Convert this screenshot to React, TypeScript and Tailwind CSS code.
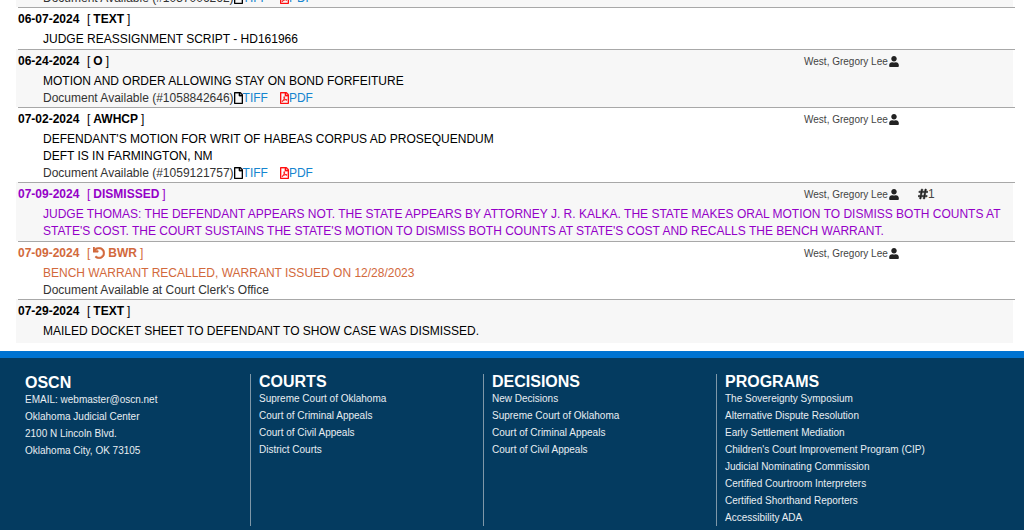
import React from "react";
import { FaHashtag, FaRegFile, FaRegFilePdf, FaUndo, FaUser } from "react-icons/fa";

interface DocketEntry {
    date: string;
    code: string;
    lines: string[];
    color?: string;
    party?: string;
    count?: string;
    documentId?: string;
    note?: string;
    recalled?: boolean;
}

const entries: DocketEntry[] = [
    {
        date: "06-07-2024",
        code: "TEXT",
        lines: ["JUDGE REASSIGNMENT SCRIPT - HD161966"],
    },
    {
        date: "06-24-2024",
        code: "O",
        lines: ["MOTION AND ORDER ALLOWING STAY ON BOND FORFEITURE"],
        party: "West, Gregory Lee",
        documentId: "1058842646",
    },
    {
        date: "07-02-2024",
        code: "AWHCP",
        lines: [
            "DEFENDANT'S MOTION FOR WRIT OF HABEAS CORPUS AD PROSEQUENDUM",
            "DEFT IS IN FARMINGTON, NM",
        ],
        party: "West, Gregory Lee",
        documentId: "1059121757",
    },
    {
        date: "07-09-2024",
        code: "DISMISSED",
        lines: [
            "JUDGE THOMAS: THE DEFENDANT APPEARS NOT. THE STATE APPEARS BY ATTORNEY J. R. KALKA. THE STATE MAKES ORAL MOTION TO DISMISS BOTH COUNTS AT STATE'S COST. THE COURT SUSTAINS THE STATE'S MOTION TO DISMISS BOTH COUNTS AT STATE'S COST AND RECALLS THE BENCH WARRANT.",
        ],
        color: "text-[#9400c8]",
        party: "West, Gregory Lee",
        count: "1",
    },
    {
        date: "07-09-2024",
        code: "BWR",
        lines: ["BENCH WARRANT RECALLED, WARRANT ISSUED ON 12/28/2023"],
        color: "text-[#d2693c]",
        party: "West, Gregory Lee",
        note: "Document Available at Court Clerk's Office",
        recalled: true,
    },
    {
        date: "07-29-2024",
        code: "TEXT",
        lines: ["MAILED DOCKET SHEET TO DEFENDANT TO SHOW CASE WAS DISMISSED."],
    },
];

const linkColumns = [
    {
        title: "COURTS",
        links: [
            "Supreme Court of Oklahoma",
            "Court of Criminal Appeals",
            "Court of Civil Appeals",
            "District Courts",
        ],
    },
    {
        title: "DECISIONS",
        links: [
            "New Decisions",
            "Supreme Court of Oklahoma",
            "Court of Criminal Appeals",
            "Court of Civil Appeals",
        ],
    },
    {
        title: "PROGRAMS",
        links: [
            "The Sovereignty Symposium",
            "Alternative Dispute Resolution",
            "Early Settlement Mediation",
            "Children's Court Improvement Program (CIP)",
            "Judicial Nominating Commission",
            "Certified Courtroom Interpreters",
            "Certified Shorthand Reporters",
            "Accessibility ADA",
        ],
    },
];

function DocumentLinks({ id }: { id: string }) {
    return (
        <p className="flex items-center h-4 text-[#333]">
            Document Available (#{id})
            <a href="#tiff" className="flex items-center text-[#1585cf]">
                <FaRegFile className="w-[9px] h-3 text-black stroke-current stroke-[16]" />
                TIFF
            </a>
            <a href="#pdf" className="flex items-center ml-3 text-[#1585cf]">
                <FaRegFilePdf className="w-[9px] h-3 text-[#ff1010] stroke-current stroke-[16]" />
                PDF
            </a>
        </p>
    );
}

function Entry({ entry }: { entry: DocketEntry }) {
    return (
        <li className={`ml-4 mr-[11px] pb-px last:pb-[3px] even:bg-[#f7f7f7] ${entry.color ?? "text-black"}`}>
            <hr className="ml-0.5 -mr-0.5 border-[#a8a8a8]" />
            <div className="flex items-center h-[22px] pl-0.5">
                <div className="flex w-[79%] font-bold">
                    <span className="w-[69px]">{entry.date}</span>
                    <span className="flex items-center gap-[3px]">
                        <span className="font-normal">[</span>
                        {entry.recalled && <FaUndo className="w-3 h-3 stroke-current stroke-[20]" />}
                        <span>{entry.code}</span>
                        <span className="font-normal">]</span>
                    </span>
                </div>
                {entry.party && (
                    <div className="flex items-center gap-px w-[114px] text-[10px] text-[#444]">
                        {entry.party}
                        <FaUser className="w-[10px] h-[11px] text-[#222]" />
                    </div>
                )}
                {entry.count && (
                    <div className="flex items-center text-[#444]">
                        <FaHashtag className="w-2.5 h-3 text-[#222] stroke-current stroke-[24]" />
                        {entry.count}
                    </div>
                )}
            </div>
            <div className="pl-[27px] pt-px leading-[17px]">
                {entry.lines.map((line) => (
                    <p key={line}>{line}</p>
                ))}
                {entry.documentId && <DocumentLinks id={entry.documentId} />}
                {entry.note && <p className="leading-4 text-[#333]">{entry.note}</p>}
            </div>
        </li>
    );
}

export default function App() {
    return (
        <div className="min-h-screen flex flex-col overflow-hidden bg-white font-['Liberation_Sans',Arial,sans-serif] text-[12px]">
            <main className="pb-2">
                <div className="-mt-[10px] ml-4 mr-[11px] pl-[27px] pb-px bg-[#f7f7f7]">
                    <DocumentLinks id="1057006262" />
                </div>
                <ul>
                    {entries.map((entry) => (
                        <Entry key={entry.date + entry.code} entry={entry} />
                    ))}
                </ul>
            </main>
            <footer className="grow border-t-[7px] border-[#0073d1] bg-[#043b60] text-[#e8eef2] text-[10px] px-4 pt-4">
                <div className="grid grid-cols-[234fr_233fr_233fr_292fr]">
                    <section className="pl-[9px]">
                        <h2 className="text-[16px] leading-[17px] font-bold text-white">OSCN</h2>
                        <address className="not-italic leading-[17px]">
                            <p>
                                EMAIL: <a href="mailto:webmaster@oscn.net">webmaster@oscn.net</a>
                            </p>
                            <p>Oklahoma Judicial Center</p>
                            <p>2100 N Lincoln Blvd.</p>
                            <p>Oklahoma City, OK 73105</p>
                        </address>
                    </section>
                    {linkColumns.map((column) => (
                        <section key={column.title} className="border-l border-[#7f97a8] pl-2">
                            <h2 className="text-[16px] leading-4 font-bold text-white">{column.title}</h2>
                            <ul className="leading-[17px]">
                                {column.links.map((link) => (
                                    <li key={link}>
                                        <a href="#footer">{link}</a>
                                    </li>
                                ))}
                            </ul>
                        </section>
                    ))}
                </div>
            </footer>
        </div>
    );
}
